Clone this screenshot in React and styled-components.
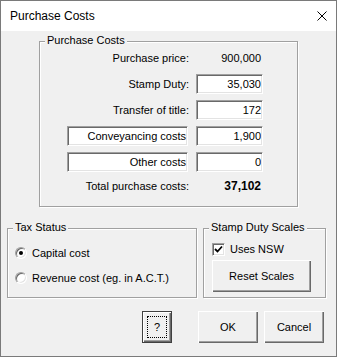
import styled, { createGlobalStyle } from 'styled-components';

const GlobalStyle = createGlobalStyle`
    body {
        margin: 0;
        font-family: 'Liberation Sans', Arial, sans-serif;
        font-size: 11px;
        color: #000;
    }
`;

const costRows = [
    { label: 'Stamp Duty:', value: '35,030' },
    { label: 'Transfer of title:', value: '172' },
];

const customRows = [
    { label: 'Conveyancing costs', value: '1,900' },
    { label: 'Other costs', value: '0' },
];

const App = () => {
    return (
        <>
            <GlobalStyle />
            <Window>
                <TitleBar>
                    <Title>Purchase Costs</Title>
                    <CloseIcon width="10" height="10" viewBox="0 0 10 10">
                        <path d="M0.5 0.5 L9.5 9.5 M9.5 0.5 L0.5 9.5" stroke="#000" strokeWidth="1" />
                    </CloseIcon>
                </TitleBar>
                <Body>
                    <CostsGroup>
                        <Caption>Purchase Costs</Caption>
                        <CostsGrid>
                            <Label>Purchase price:</Label>
                            <Value>900,000</Value>
                            {costRows.map(row => (
                                <Row key={row.label}>
                                    <Label>{row.label}</Label>
                                    <Field readOnly defaultValue={row.value} />
                                </Row>
                            ))}
                            {customRows.map(row => (
                                <Row key={row.label}>
                                    <Field wide readOnly defaultValue={row.label} />
                                    <Field readOnly defaultValue={row.value} />
                                </Row>
                            ))}
                            <Label>Total purchase costs:</Label>
                            <Value bold>37,102</Value>
                        </CostsGrid>
                    </CostsGroup>

                    <LowerRow>
                        <TaxGroup>
                            <Caption>Tax Status</Caption>
                            <Option>
                                <Radio checked />
                                Capital cost
                            </Option>
                            <Option>
                                <Radio />
                                Revenue cost (eg. in A.C.T.)
                            </Option>
                        </TaxGroup>
                        <ScalesGroup>
                            <Caption>Stamp Duty Scales</Caption>
                            <Option>
                                <CheckBox>
                                    <svg width="9" height="9" viewBox="0 0 9 9">
                                        <path d="M1 4 L3.5 6.5 L8 1.5" stroke="#000" strokeWidth="1.8" fill="none" />
                                    </svg>
                                </CheckBox>
                                Uses NSW
                            </Option>
                            <ResetButton>Reset Scales</ResetButton>
                        </ScalesGroup>
                    </LowerRow>

                    <ButtonRow>
                        <HelpButton>
                            <FocusRing>?</FocusRing>
                        </HelpButton>
                        <Button>OK</Button>
                        <Button>Cancel</Button>
                    </ButtonRow>
                </Body>
            </Window>
        </>
    )
}

export default App;

const Window = styled.div`
    width: 337px;
    height: 357px;
    box-sizing: border-box;
    border: 1px solid #7a7a7a;
    display: flex;
    flex-direction: column;
`;

const TitleBar = styled.div`
    height: 30px;
    background: #fff;
    display: flex;
    align-items: center;
    justify-content: space-between;
    padding: 0 9px;
`;

const Title = styled.span`
    font-size: 12px;
`;

const CloseIcon = styled.svg`
    display: block;
`;

const Body = styled.div`
    flex: 1;
    background: #f0f0f0;
    display: flex;
    flex-direction: column;
    padding-top: 10px;
`;

const Group = styled.div`
    position: relative;
    box-sizing: border-box;
    border: 1px solid #a0a0a0;
    box-shadow: inset 1px 1px 0 #fff, 1px 1px 0 #fff;
`;

const Caption = styled.span`
    position: absolute;
    top: -8px;
    left: 5px;
    padding: 0 2px;
    line-height: 13px;
    background: #f0f0f0;
`;

const CostsGroup = styled(Group)`
    width: 259px;
    margin-left: 38px;
`;

const CostsGrid = styled.div`
    display: grid;
    grid-template-columns: 122px 67px;
    grid-template-rows: repeat(5, 20px) 16px;
    column-gap: 7px;
    row-gap: 6px;
    padding: 6px 34px 12px 27px;
`;

const Row = styled.div`
    display: contents;
`;

const Label = styled.span`
    align-self: center;
    text-align: right;
`;

const Value = styled.span`
    align-self: center;
    text-align: right;
    padding-right: 2px;
    font-size: ${props => props.bold ? '12px' : '11px'};
    font-weight: ${props => props.bold ? 700 : 400};
`;

const Field = styled.input`
    box-sizing: border-box;
    width: ${props => props.wide ? '121px' : '67px'};
    height: 20px;
    margin: 0;
    padding: 0 1px 0 0;
    font: inherit;
    color: #000;
    text-align: right;
    background: #fff;
    border: 1px solid;
    border-color: #a0a0a0 #fff #fff #a0a0a0;
    box-shadow: inset 1px 1px 0 #696969, inset -1px -1px 0 #e3e3e3;
    outline: none;
`;

const LowerRow = styled.div`
    display: flex;
    gap: 6px;
    margin-top: 21px;
    padding-left: 6px;
`;

const TaxGroup = styled(Group)`
    width: 190px;
    height: 70px;
    display: flex;
    flex-direction: column;
    gap: 9px;
    padding: 16px 0 0 7px;
`;

const ScalesGroup = styled(Group)`
    width: 123px;
    height: 70px;
    display: flex;
    flex-direction: column;
    align-items: flex-start;
    gap: 3px;
    padding: 12px 0 0 8px;
`;

const Option = styled.div`
    height: 16px;
    display: flex;
    align-items: center;
    gap: 5px;
`;

const Radio = styled.span`
    box-sizing: border-box;
    width: 12px;
    height: 12px;
    border-radius: 50%;
    border: 1px solid;
    border-color: #a0a0a0 #fff #fff #a0a0a0;
    box-shadow: inset 1px 1px 0 #696969, inset -1px -1px 0 #e3e3e3;
    background: #fff;
    display: flex;
    align-items: center;
    justify-content: center;

    &::after {
        content: '';
        width: 4px;
        height: 4px;
        border-radius: 50%;
        background: ${props => props.checked ? '#000' : 'transparent'};
    }
`;

const CheckBox = styled.span`
    box-sizing: border-box;
    width: 13px;
    height: 13px;
    border: 1px solid;
    border-color: #a0a0a0 #fff #fff #a0a0a0;
    box-shadow: inset 1px 1px 0 #696969, inset -1px -1px 0 #e3e3e3;
    background: #fff;
    display: flex;
    align-items: center;
    justify-content: center;
`;

const Button = styled.button`
    box-sizing: border-box;
    width: 60px;
    height: 32px;
    margin: 0;
    padding: 0;
    font: inherit;
    color: #000;
    background: #f0f0f0;
    border: none;
    box-shadow: inset 1px 1px 0 #fff, inset -1px -1px 0 #696969, inset -2px -2px 0 #a0a0a0;
`;

const ResetButton = styled(Button)`
    width: 99px;
`;

const HelpButton = styled(Button)`
    width: 30px;
    margin-right: 20px;
    padding: 4px;
    border: 1px solid #404040;
    display: flex;
`;

const FocusRing = styled.span`
    flex: 1;
    border: 1px dotted #000;
    display: flex;
    align-items: center;
    justify-content: center;
`;

const ButtonRow = styled.div`
    display: flex;
    justify-content: flex-end;
    gap: 6px;
    margin-top: 13px;
    padding-right: 12px;
`;
